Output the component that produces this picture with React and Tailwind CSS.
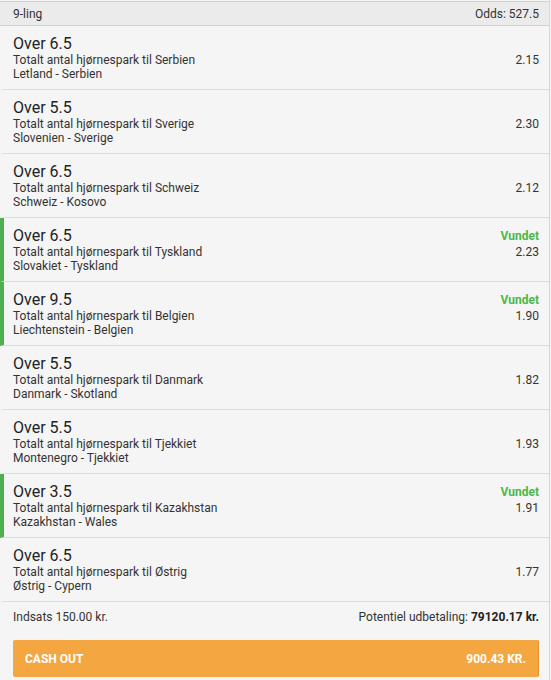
const bets = [
  { line: 'Over 6.5', team: 'Serbien', match: 'Letland - Serbien', odds: '2.15' },
  { line: 'Over 5.5', team: 'Sverige', match: 'Slovenien - Sverige', odds: '2.30' },
  { line: 'Over 6.5', team: 'Schweiz', match: 'Schweiz - Kosovo', odds: '2.12' },
  { line: 'Over 6.5', team: 'Tyskland', match: 'Slovakiet - Tyskland', odds: '2.23', won: true },
  { line: 'Over 9.5', team: 'Belgien', match: 'Liechtenstein - Belgien', odds: '1.90', won: true },
  { line: 'Over 5.5', team: 'Danmark', match: 'Danmark - Skotland', odds: '1.82' },
  { line: 'Over 5.5', team: 'Tjekkiet', match: 'Montenegro - Tjekkiet', odds: '1.93' },
  { line: 'Over 3.5', team: 'Kazakhstan', match: 'Kazakhstan - Wales', odds: '1.91', won: true },
  { line: 'Over 6.5', team: 'Østrig', match: 'Østrig - Cypern', odds: '1.77' },
]

function BetRow({ bet }) {
  return (
    <div
      className={`flex justify-between border-b border-b-[#dedede] border-l-4 pl-[9px] pr-[10px] pt-[9px] pb-[8px] ${
        bet.won ? 'border-l-[#4caf50]' : 'border-l-[#f5f5f5]'
      }`}
    >
      <div className="flex flex-col">
        <span className="text-[16px] leading-[18px] text-[#222]">{bet.line}</span>
        <span className="text-[12px] leading-[14px] text-[#333]">Totalt antal hjørnespark til {bet.team}</span>
        <span className="text-[12px] leading-[14px] text-[#333]">{bet.match}</span>
      </div>
      <div className="flex flex-col items-end">
        <span className="h-[18px] text-[12px] leading-[18px] font-bold text-[#4db848]">{bet.won ? 'Vundet' : ''}</span>
        <span className="text-[12px] leading-[14px] text-[#333]">{bet.odds}</span>
      </div>
    </div>
  )
}

export default function App() {
  return (
    <div className="w-[551px] h-[680px] bg-[#f5f5f5] font-['Roboto',sans-serif]">
      <div className="w-[550px] h-full border-r border-r-[#d6d6d6] pt-px">
        {/* header */}
        <div className="flex justify-between items-center h-[25px] bg-[#ebebeb] border-y border-[#d2d2d2] pl-[13px] pr-[10px] text-[12px] text-[#333]">
          <span>9-ling</span>
          <span>Odds: 527.5</span>
        </div>

        {bets.map((b, i) => (
          <BetRow key={i} bet={b} />
        ))}

        {/* footer */}
        <div className="flex justify-between pl-[13px] pr-[10px] pt-[8px] text-[12px] leading-[14px] text-[#333]">
          <span>Indsats 150.00 kr.</span>
          <span>
            Potentiel udbetaling: <b className="font-bold text-[#222]">79120.17 kr.</b>
          </span>
        </div>
        <div className="pl-[13px] pr-[10px] pt-[16px]">
          <button className="flex w-full justify-between items-center h-[37px] px-3 rounded-[2px] bg-[#f4a641] border-r border-r-[#e0902c] text-[12px] font-bold text-white uppercase">
            <span>Cash out</span>
            <span>900.43 kr.</span>
          </button>
        </div>
      </div>
    </div>
  )
}
